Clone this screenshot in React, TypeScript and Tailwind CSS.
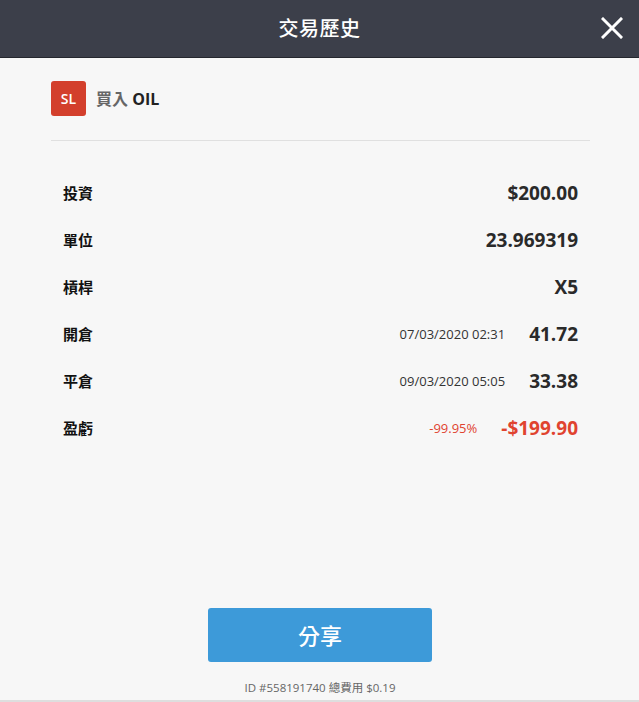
import React from 'react';

const FONT = { fontFamily: '"Open Sans", "Noto Sans CJK TC", sans-serif' };

interface Row {
  label: string;
  value: string;
  note?: string;
  red?: boolean;
}

const ROWS: Row[] = [
  { label: '投資', value: '$200.00' },
  { label: '單位', value: '23.969319' },
  { label: '槓桿', value: 'X5' },
  { label: '開倉', value: '41.72', note: '07/03/2020 02:31' },
  { label: '平倉', value: '33.38', note: '09/03/2020 05:05' },
  { label: '盈虧', value: '-$199.90', note: '-99.95%', red: true },
];

export default function App() {
  return (
    <div className="h-[702px] flex flex-col bg-[#f7f7f7] border-b-2 border-[#dedede]" style={FONT}>
      {/* header */}
      <div className="relative h-[58px] shrink-0 bg-[#3c3f4a] border-b border-[#25272e] flex items-center justify-center">
        <span className="text-white text-[20px] font-medium tracking-wide">交易歷史</span>
        <button className="absolute right-[16px] top-[17px] w-[22px] h-[22px]">
          <svg viewBox="0 0 22 22" width="22" height="22">
            <path d="M2 2 L20 20 M20 2 L2 20" stroke="#fff" strokeWidth="3" strokeLinecap="square" />
          </svg>
        </button>
      </div>

      <div className="flex-1 flex flex-col pl-[51px] pr-[49px] pt-[23px]">
        <div className="flex items-center gap-[10px] pb-[24px] border-b border-[#e0e0e0]">
          <div className="w-[35px] h-[35px] rounded-[3px] bg-[#d33f2c] flex items-center justify-center text-white text-[14px] font-semibold">
            SL
          </div>
          <div className="text-[16px] font-bold">
            <span className="text-[#666]">買入</span> <span className="text-[#222]">OIL</span>
          </div>
        </div>

        <div className="pt-[29px] px-[12px]">
          {ROWS.map((r) => (
            <div key={r.label} className="h-[47px] flex items-center">
              <span className="text-[15px] font-bold text-[#111]">{r.label}</span>
              <div className="ml-auto flex items-center gap-[24px]">
                {r.note && (
                  <span className={`text-[13px] ${r.red ? 'text-[#e0432f]' : 'text-[#333]'}`}>{r.note}</span>
                )}
                <span className={`text-[19px] font-bold ${r.red ? 'text-[#e0432f]' : 'text-[#2a2a2a]'}`}>{r.value}</span>
              </div>
            </div>
          ))}
        </div>

        <div className="mt-auto flex flex-col items-center pb-[4px] -ml-[1px]">
          <button className="w-[224px] h-[54px] rounded-[3px] bg-[#3d9ad9] text-white text-[22px] font-medium">
            分享
          </button>
          <div className="mt-[18px] h-[16px] leading-[16px] text-[11.5px] text-[#666]">ID #558191740 總費用 $0.19</div>
        </div>
      </div>
    </div>
  );
}
